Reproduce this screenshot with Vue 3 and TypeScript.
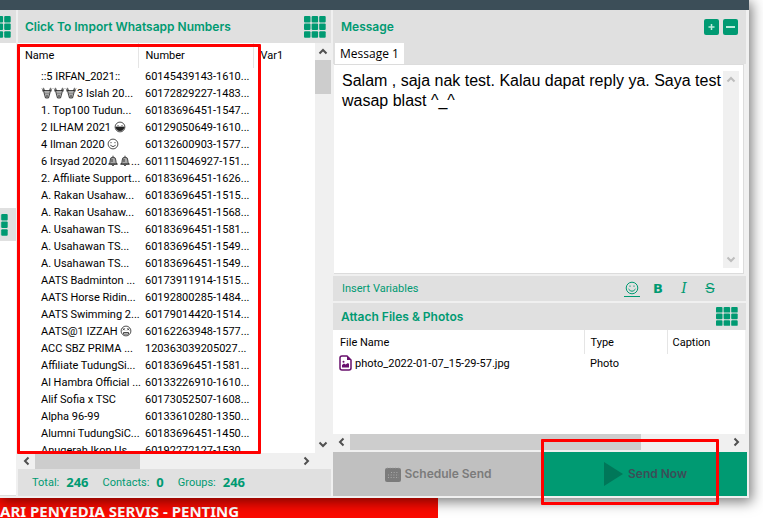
<script setup lang="ts">
import { ref } from 'vue'

type Glyph = 'deer' | 'grin' | 'smile' | 'bell' | 'dizzy'
interface Contact { lead: string; glyphs?: Glyph[]; tail?: string; number: string }

const contacts: Contact[] = [
  { lead: '::5 IRFAN_2021::', number: '60145439143-1610...' },
  { lead: '', glyphs: ['deer', 'deer', 'deer'], tail: '3 Islah 20...', number: '60172829227-1483...' },
  { lead: '1. Top100 Tudun...', number: '60183696451-1547...' },
  { lead: '2 ILHAM 2021 ', glyphs: ['grin'], number: '60129050649-1610...' },
  { lead: '4 Ilman 2020 ', glyphs: ['smile'], number: '60132600903-1577...' },
  { lead: '6 Irsyad 2020', glyphs: ['bell', 'bell'], tail: '...', number: '601115046927-151...' },
  { lead: '2. Affiliate Support...', number: '60183696451-1626...' },
  { lead: 'A. Rakan Usahaw...', number: '60183696451-1515...' },
  { lead: 'A. Rakan Usahaw...', number: '60183696451-1568...' },
  { lead: 'A. Usahawan TS...', number: '60183696451-1581...' },
  { lead: 'A. Usahawan TS...', number: '60183696451-1549...' },
  { lead: 'A. Usahawan TS...', number: '60183696451-1549...' },
  { lead: 'AATS Badminton ...', number: '60173911914-1515...' },
  { lead: 'AATS Horse Ridin...', number: '60192800285-1484...' },
  { lead: 'AATS Swimming 2...', number: '60179014420-1514...' },
  { lead: 'AATS@1 IZZAH ', glyphs: ['dizzy'], number: '60162263948-1577...' },
  { lead: 'ACC SBZ PRIMA ...', number: '120363039205027...' },
  { lead: 'Affiliate TudungSi...', number: '60183696451-1581...' },
  { lead: 'Al Hambra Official ...', number: '60133226910-1610...' },
  { lead: 'Alif Sofia x TSC', number: '60173052507-1608...' },
  { lead: 'Alpha 96-99', number: '60133610280-1350...' },
  { lead: 'Alumni TudungSiC...', number: '60183696451-1450...' },
  { lead: 'Anugerah Ikon Us...', number: '60192272127-1530...' },
]
const message = ref('Salam , saja nak test. Kalau dapat reply ya. Saya test wasap blast ^_^')
const cells = [0, 1, 2, 3, 4, 5, 6, 7, 8]
</script>

<template>
  <div class="page">
    <main class="window">
      <div class="titlebar"></div>
      <div class="panes">
        <aside class="side">
          <div class="side-head">
            <svg class="grid-icon" viewBox="0 0 22 22"><rect v-for="c in cells" :key="c" :x="(c % 3) * 7.6" :y="Math.floor(c / 3) * 7.6" width="6.5" height="6.5" rx="1" /></svg>
          </div>
          <div class="side-list"></div>
          <div class="side-head">
            <svg class="grid-icon small" viewBox="0 0 22 22"><rect v-for="c in cells" :key="c" :x="(c % 3) * 7.6" :y="Math.floor(c / 3) * 7.6" width="6.5" height="6.5" rx="1" /></svg>
          </div>
          <div class="side-list tall"></div>
        </aside>

        <section class="import">
          <header class="head">
            <h2>Click To Import Whatsapp Numbers</h2>
            <button class="icon-btn" type="button" aria-label="Import options">
              <svg class="grid-icon" viewBox="0 0 22 22"><rect v-for="c in cells" :key="c" :x="(c % 3) * 7.6" :y="Math.floor(c / 3) * 7.6" width="6.5" height="6.5" rx="1" /></svg>
            </button>
          </header>
          <div class="list-area">
            <div class="list-clip">
              <table class="contacts">
                <thead>
                  <tr><th class="c-name">Name</th><th class="c-number">Number</th><th>Var1</th></tr>
                </thead>
                <tbody>
                  <tr v-for="(row, i) in contacts" :key="i">
                    <td class="c-name">{{ row.lead }}<svg v-for="(g, k) in row.glyphs" :key="k" class="emoji" viewBox="0 0 12 12">
                        <g v-if="g === 'deer'">
                          <path d="M1 1.5q1 2 3 2M11 1.5q-1 2-3 2M2.5.8l.7 2.3M9.500.8l-.7 2.3M1 3.800h3M11 3.800H8" />
                          <path class="shade" d="M2.500 3.500h7l-1.200 5L7.500 11h-3l-.8-2.500z" />
                          <path d="M5 6v.5M7 6v.5M5 9h2" />
                        </g>
                        <g v-else-if="g === 'bell'">
                          <path class="shade" d="M2 9q1.200-1.200 1.200-4a2.800 2.800 0 0 1 5.600 0q0 2.800 1.200 4z" />
                          <path d="M6 .7v1.500M1.200 9.200h9.600M4.800 9.500q1.200 3 2.400 0M5 4v3" />
                        </g>
                        <g v-else>
                          <circle cx="6" cy="6" r="4.900" />
                          <path v-if="g !== 'dizzy'" d="M4 4v1.200M8 4v1.200" />
                          <path v-if="g === 'grin'" class="ink" d="M1.800 6h8.400Q9.500 9.800 6 9.800T1.800 6z" />
                          <path v-else-if="g === 'smile'" d="M3.300 7.200q2.700 3 5.400 0" />
                          <path v-else d="M2.800 3.300l2 2M4.800 3.300l-2 2M7.200 3.300l2 2M9.200 3.300l-2 2M3.500 7.500h5v1.600h-5z" />
                        </g>
                      </svg>{{ row.tail }}</td>
                    <td class="c-number">{{ row.number }}</td>
                    <td></td>
                  </tr>
                </tbody>
              </table>
            </div>
            <div class="vbar">
              <svg class="arrow" viewBox="0 0 16 16"><path d="M4.500 10L8 6.500l3.500 3.500" /></svg>
              <div class="thumb"></div>
              <svg class="arrow" viewBox="0 0 16 16"><path d="M4.500 6L8 9.500 11.500 6" /></svg>
            </div>
            <div class="callout list-callout"></div>
          </div>
          <div class="hbar">
            <svg class="arrow" viewBox="0 0 16 16"><path d="M10 4.500L6.500 8l3.500 3.500" /></svg>
            <div class="thumb"></div>
            <svg class="arrow end" viewBox="0 0 16 16"><path d="M6 4.500L9.500 8 6 11.500" /></svg>
          </div>
          <footer class="totals">
            <span>Total: <b>246</b></span><span>Contacts: <b>0</b></span><span>Groups: <b>246</b></span>
          </footer>
        </section>

        <section class="compose">
          <header class="head">
            <h2>Message</h2>
            <div class="adders">
              <button type="button" aria-label="Add message"><svg viewBox="0 0 15 16"><path d="M7.500 5v6M4.500 8h6" /></svg></button>
              <button type="button" aria-label="Remove message"><svg viewBox="0 0 15 16"><path class="thick" d="M3 8h9" /></svg></button>
            </div>
          </header>
          <div class="tabs"><button class="tab" type="button">Message 1</button></div>
          <div class="editor">
            <textarea v-model="message" aria-label="Message 1" spellcheck="false"></textarea>
            <div class="vbar faint">
              <svg class="arrow" viewBox="0 0 16 16"><path d="M4.500 10L8 6.500l3.500 3.500" /></svg>
              <svg class="arrow" viewBox="0 0 16 16"><path d="M4.500 6L8 9.500 11.500 6" /></svg>
            </div>
          </div>
          <div class="toolbar">
            <a class="insert" href="#">Insert Variables</a>
            <div class="formats">
              <button class="face" type="button" aria-label="Emoji">
                <svg viewBox="0 0 14 14"><circle cx="7" cy="7" r="5.800" /><path d="M5 4.500v1.300M9 4.500v1.300M3.500 8q3.500 4.500 7 0" /></svg>
              </button>
              <button class="bold" type="button">B</button>
              <button class="italic" type="button">I</button>
              <button class="strike" type="button">S</button>
            </div>
          </div>
          <header class="head attach">
            <h2>Attach Files &amp; Photos</h2>
            <button class="icon-btn" type="button" aria-label="Attach options">
              <svg class="grid-icon short" preserveAspectRatio="none" viewBox="0 0 22 22"><rect v-for="c in cells" :key="c" :x="(c % 3) * 7.6" :y="Math.floor(c / 3) * 7.6" width="6.5" height="6.5" rx="1" /></svg>
            </button>
          </header>
          <div class="files-area">
            <table class="files">
              <thead><tr><th class="f-name">File Name</th><th class="f-type">Type</th><th>Caption</th></tr></thead>
              <tbody>
                <tr>
                  <td class="f-name"><div class="file">
                    <svg viewBox="0 0 13 16"><path d="M3 1h5l4 4v8q0 2-2 2H3q-2 0-2-2V3q0-2 2-2z" /><path class="fill" d="M8 1v4h4zM3 12.500V10l2-1.500 1.500 1L9 8l1 1v3.500z" /><circle class="fill" cx="4.500" cy="6.800" r="1" /></svg>
                    <span>photo_2022-01-07_15-29-57.jpg</span></div></td>
                  <td class="f-type">Photo</td><td></td>
                </tr>
              </tbody>
            </table>
          </div>
          <div class="hbar files-bar">
            <svg class="arrow" viewBox="0 0 16 16"><path d="M10 4.500L6.500 8l3.500 3.500" /></svg>
            <div class="thumb"></div>
            <svg class="arrow end" viewBox="0 0 16 16"><path d="M6 4.500L9.500 8 6 11.500" /></svg>
          </div>
          <div class="actions">
            <button class="schedule" type="button">
              <svg viewBox="0 0 16 15"><path d="M2 1h12q2 0 2 2v10q0 2-2 2H2q-2 0-2-2V3q0-2 2-2z" /><path class="dots" d="M2 .8h12M6 5.500h8M3 8h11M3 10.500h11" /></svg>
              <span>Schedule Send</span>
            </button>
            <div class="send-wrap">
              <button class="send" type="button">
                <svg viewBox="0 0 19 24"><path d="M0 0l19 12L0 24z" /></svg>
                <span>Send Now</span>
              </button>
              <div class="callout send-callout"></div>
            </div>
          </div>
        </section>
      </div>
    </main>
    <div class="banner">ARI PENYEDIA SERVIS - PENTING</div>
  </div>
</template>

<style>
body { background: #fff; }
</style>

<style scoped>
* { box-sizing: border-box; }
.page { height: 100vh; display: flex; flex-direction: column; overflow: hidden; background: #fff; color: #000; font: 11px/17px Roboto, "Liberation Sans", sans-serif; }
button { margin: 0; padding: 0; border: 0; background: none; font: inherit; color: inherit; }
h2 { margin: 0; font: 600 12px/16px Inter, "Liberation Sans", sans-serif; color: #009a72; }
table { border-collapse: collapse; table-layout: fixed; width: 100%; }
th, td { padding: 0; text-align: left; font-weight: normal; white-space: nowrap; }
.window { flex: 1; min-height: 0; margin-right: 14px; display: flex; flex-direction: column; background: #f0f0f0; box-shadow: 2px 3px 12px 1px rgba(0, 0, 0, .5); position: relative; z-index: 1; }
.titlebar { height: 10px; background: #3c4e58; }
.panes { flex: 1; min-height: 0; display: flex; gap: 2px; padding-bottom: 2px; }
.side { width: 16px; display: flex; flex-direction: column; }
.side-head { height: 33px; background: #e0e0e0; display: flex; align-items: center; justify-content: flex-end; padding-right: 5px; overflow: hidden; }
.side-list { height: 165px; background: #fff; }
.side-list.tall { flex: 1; height: auto; border-bottom: 1px solid #ddd; }
.grid-icon { width: 22px; height: 22px; flex: none; fill: #009a72; display: block; }
.side-head .small { margin-right: 3px; }
.grid-icon.short { height: 19px; }
.import { width: 313px; display: flex; flex-direction: column; }
.head { height: 33px; display: flex; align-items: center; justify-content: space-between; background: #e0e0e0; padding: 0 5px 0 7px; }
.list-area { flex: 1; min-height: 0; display: flex; position: relative; background: #fff; }
.list-clip { flex: 1; min-width: 0; overflow: hidden; }
.contacts th { height: 25px; border-right: 1px solid #e5e5e5; padding-left: 7px; }
.contacts td { height: 17px; padding-left: 7px; }
.contacts .c-name { width: 120px; }
.contacts .c-number { width: 115px; }
.contacts td.c-name { padding-left: 23px; white-space: pre; }
.contacts th:last-child { border: 0; }
.emoji { width: 12px; height: 12px; vertical-align: -2px; fill: none; stroke: #222; stroke-width: .8; }
.emoji .shade { fill: #aaa; }
.emoji .ink { fill: #222; }
.vbar { width: 16px; background: #f0f0f0; display: flex; flex-direction: column; }
.vbar .arrow:last-child { margin-top: auto; }
.vbar .thumb { height: 34px; background: #cdcdcd; }
.arrow { width: 16px; height: 17px; flex: none; fill: none; stroke: #505050; stroke-width: 2; display: block; }
.hbar { height: 16px; background: #f0f0f0; display: flex; }
.hbar .thumb { width: 105px; background: #cdcdcd; }
.hbar .arrow { width: 17px; height: 16px; }
.hbar .end { margin-left: auto; }
.import .end { margin-right: 16px; }
.totals { height: 27px; background: #e0e0e0; display: flex; align-items: center; gap: 14px; padding-left: 14px; color: #009a72; }
.totals span { display: flex; gap: 7px; }
.totals b { font: bold 13px/17px "Noto Sans", sans-serif; }
.callout { position: absolute; border: 3px solid #f00; border-radius: 1px; pointer-events: none; }
.list-callout { left: -1px; top: 1px; bottom: -1px; width: 244px; }
.compose { flex: 1; min-width: 0; display: flex; flex-direction: column; }
.compose .head { padding: 0 8px; margin-right: 3px; }
.adders { display: flex; gap: 4px; }
.adders button { width: 15px; height: 16px; border-radius: 2px; background: #009a72; }
.adders svg { display: block; width: 15px; height: 16px; fill: none; stroke: #bcebdc; stroke-width: 1.5; }
.adders .thick { stroke-width: 2; }
.tabs { height: 21px; background: #e0e0e0; padding-left: 2px; margin-right: 3px; }
.tab { width: 69px; height: 21px; background: #fff; font: 12px/20px "Open Sans", "Noto Sans", sans-serif; }
.editor { flex: 1; min-height: 0; display: flex; background: #fff; margin: 0 5px 2px 1px; border: 1px solid #dcdcdc; border-left-width: 0; padding: 6px 4px 5px 0; }
textarea { flex: 1; min-width: 0; border: 0; outline: 0; resize: none; overflow: hidden; padding: 0 0 0 8px; font: 16px/20px "Liberation Sans", Arial, sans-serif; color: #000; background: #fff; }
.faint .arrow { stroke: #bdbdbd; }
.toolbar { height: 25px; display: flex; align-items: center; justify-content: space-between; background: #e0e0e0; margin: 0 3px 2px 0; padding: 0 28px 0 9px; color: #009a72; }
.insert { color: inherit; text-decoration: none; }
.formats { display: flex; align-items: center; gap: 10px; }
.formats button { width: 16px; height: 17px; text-align: center; }
.formats .face { border-bottom: 1px solid #009a72; }
.face svg { width: 14px; height: 14px; display: block; margin: 0 auto; fill: none; stroke: #009a72; }
.formats .bold { font: bold 13px/17px "DejaVu Sans", sans-serif; }
.formats .italic { font: italic 14px/17px "DejaVu Serif", serif; }
.formats .strike { font: 14px/17px "Liberation Sans", sans-serif; text-decoration: line-through; }
.compose .attach { height: 27px; }
.files-area { height: 104px; background: #fff; margin-right: 4px; }
.files th { height: 24px; border-right: 1px solid #e5e5e5; padding-left: 7px; }
.files th:last-child { border: 0; padding-left: 5px; }
.files td { padding-left: 7px; height: 18px; }
.files .f-name { width: 251px; }
.files .f-type { width: 83px; padding-left: 6px; }
.file { display: flex; align-items: center; gap: 3px; margin-left: -1px; }
.file svg { width: 13px; height: 16px; fill: none; stroke: #68106c; stroke-width: 1.5; }
.file .fill { fill: #68106c; stroke: none; }
.files-bar { height: 16px; margin: 0 4px 2px 0; }
.files-bar .thumb { width: 291px; }
.actions { height: 44px; display: flex; padding-right: 2px; }
.actions button { display: flex; align-items: center; justify-content: center; height: 44px; font: 600 12px/16px Inter, sans-serif; }
.schedule { flex: 52; background: #c0c0c0; color: #7b7b7b; gap: 3px; }
.schedule svg { width: 16px; height: 15px; fill: #7b7b7b; }
.schedule .dots { fill: none; stroke: #aaa; stroke-dasharray: 1 1.700; }
.send-wrap { flex: 50; position: relative; display: flex; }
.send { flex: 1; background: #009a72; color: #3c4e58; gap: 5px; }
.send svg { width: 19px; height: 24px; fill: #007759; }
.send-callout { left: -3px; top: -13px; right: 28px; bottom: -9px; }
.banner { width: 438px; height: 20px; overflow: hidden; background: #fa0a00; color: #fff; font: bold 15px/26px "Noto Sans", sans-serif; white-space: nowrap; }
</style>
